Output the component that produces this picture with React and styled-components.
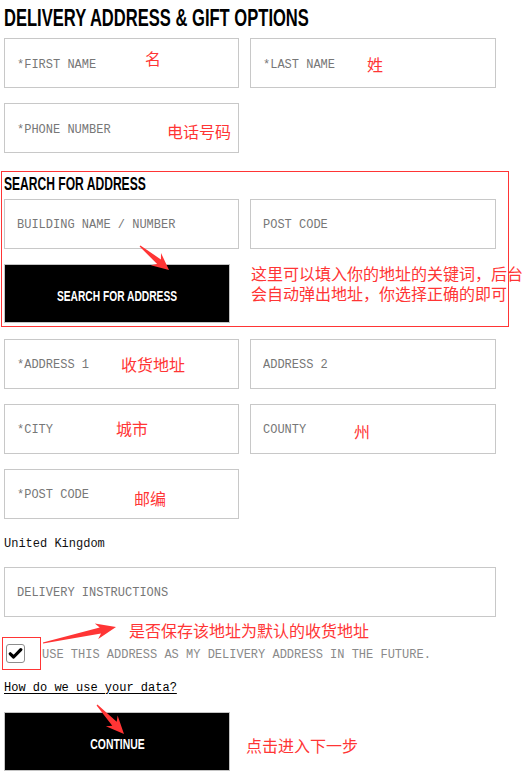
import React from "react";
import styled, { createGlobalStyle } from "styled-components";

const GlobalStyle = createGlobalStyle`
  html, body {
    margin: 0;
    padding: 0;
    background: #fff;
  }
  body {
    font-family: "Liberation Mono", "DejaVu Sans Mono", monospace;
  }
`;

const RED = "#ff3535";

const Page = styled.div`
  position: relative;
  width: 526px;
  min-height: 777px;
  box-sizing: border-box;
  padding: 7px 0 0 4px;
  overflow: hidden;
`;

const Form = styled.form`
  width: 492px;
  display: flex;
  flex-direction: column;
`;

const Condensed = styled.span`
  display: inline-block;
  white-space: nowrap;
  transform: scaleX(${({ $sx }) => $sx || 0.7});
  transform-origin: ${({ $origin }) => $origin || "left"} center;
`;

const Title = styled.h2`
  margin: 0 0 8px;
  height: 23px;
  font-family: "Liberation Sans", Arial, sans-serif;
  font-weight: 700;
  font-size: 23px;
  line-height: 23px;
  color: #000;
  white-space: nowrap;
`;

const SubTitle = styled.h3`
  margin: 0 0 6px;
  height: 18px;
  font-family: "Liberation Sans", Arial, sans-serif;
  font-weight: 700;
  font-size: 17.5px;
  line-height: 18px;
  color: #000;
  white-space: nowrap;
`;

const FieldGrid = styled.div`
  display: grid;
  grid-template-columns: 235px 246px;
  column-gap: 11px;
  row-gap: 15px;
  margin-top: ${({ $mt }) => $mt || 0}px;
`;

const Input = styled.input`
  box-sizing: border-box;
  width: 100%;
  height: 50px;
  margin: 0;
  padding: 3px 0 0 12px;
  border: 1px solid #c8c8c8;
  border-radius: 0;
  background: #fff;
  font-family: "Liberation Mono", "DejaVu Sans Mono", monospace;
  font-size: 12px;
  color: #333;
  outline: none;
  grid-column: ${({ $full }) => ($full ? "1 / -1" : "auto")};

  &::placeholder {
    color: #777;
    opacity: 1;
  }
`;

const SearchSection = styled.section`
  margin-top: 21.5px;
  display: flex;
  flex-direction: column;
`;

const BlackButton = styled.button`
  box-sizing: border-box;
  width: 226px;
  height: 59px;
  margin-top: ${({ $mt }) => $mt || 0}px;
  padding: 4px 0 0;
  border: 1px solid #c4c4c4;
  background: #000;
  color: #fff;
  font-family: "Liberation Sans", Arial, sans-serif;
  font-weight: 700;
  font-size: 15.5px;
  line-height: 15px;
  cursor: pointer;
  display: flex;
  align-items: center;
  justify-content: center;
`;

const CountryLine = styled.div`
  margin-top: 18px;
  height: 15px;
  font-size: 12px;
  line-height: 15px;
  color: #111;
`;

const CheckRow = styled.label`
  margin-top: 27px;
  display: flex;
  align-items: center;
  gap: 17px;
  padding-left: 2px;
  cursor: pointer;
`;

const CheckBox = styled.span`
  box-sizing: border-box;
  width: 19px;
  height: 19px;
  flex: none;
  border: 1px solid #8d8d8d;
  border-radius: 3px;
  background: #fff;
  display: flex;
  align-items: center;
  justify-content: center;
`;

const CheckText = styled.span`
  font-size: 12px;
  line-height: 15px;
  color: #8a8a8a;
  white-space: nowrap;
  margin-top: 4px;
`;

const DataLink = styled.a`
  margin-top: 18px;
  align-self: flex-start;
  font-size: 12px;
  line-height: 15px;
  color: #000;
  text-decoration: underline;
  text-underline-offset: 2px;
`;

/* annotation overlay: red marks laid over the screenshot */
const Overlay = styled.div`
  position: absolute;
  inset: 0;
  pointer-events: none;
`;

const Note = styled.span`
  position: absolute;
  left: ${({ $x }) => $x}px;
  top: ${({ $y }) => $y}px;
  font-family: "Noto Sans CJK SC", "Noto Sans", sans-serif;
  font-size: 16px;
  line-height: 16px;
  color: ${RED};
  white-space: nowrap;
`;

const Frame = styled.div`
  position: absolute;
  box-sizing: border-box;
  left: ${({ $x }) => $x}px;
  top: ${({ $y }) => $y}px;
  width: ${({ $w }) => $w}px;
  height: ${({ $h }) => $h}px;
  border: 1px solid ${RED};
`;

const ArrowLayer = styled.svg`
  position: absolute;
  left: 0;
  top: 0;
`;

function arrowPoints([x1, y1], [x2, y2], head = 16, half = 8, neck = 3) {
  const len = Math.hypot(x2 - x1, y2 - y1);
  const dx = (x2 - x1) / len;
  const dy = (y2 - y1) / len;
  const nx = -dy;
  const ny = dx;
  const bx = x2 - dx * head;
  const by = y2 - dy * head;
  const cx = x2 - dx * (head - 4);
  const cy = y2 - dy * (head - 4);
  const pts = [
    [x1 + nx * 0.6, y1 + ny * 0.6],
    [cx + nx * neck, cy + ny * neck],
    [bx + nx * half, by + ny * half],
    [x2, y2],
    [bx - nx * half, by - ny * half],
    [cx - nx * neck, cy - ny * neck],
    [x1 - nx * 0.6, y1 - ny * 0.6],
  ];
  return pts.map((p) => p.map((v) => v.toFixed(1)).join(",")).join(" ");
}

const arrows = [
  { from: [140, 246], to: [169, 270], head: 17, half: 8 },
  { from: [43, 643], to: [116, 627], head: 20, half: 8 },
  { from: [97, 705], to: [124, 734], head: 18, half: 8 },
];

const notes = [
  { x: 145, y: 50, text: "名" },
  { x: 367, y: 56, text: "姓" },
  { x: 167, y: 123, text: "电话号码" },
  { x: 251, y: 265, text: "这里可以填入你的地址的关键词，后台" },
  { x: 251, y: 285, text: "会自动弹出地址，你选择正确的即可" },
  { x: 121, y: 356, text: "收货地址" },
  { x: 116, y: 420, text: "城市" },
  { x: 354, y: 423, text: "州" },
  { x: 134, y: 490, text: "邮编" },
  { x: 129, y: 622, text: "是否保存该地址为默认的收货地址" },
  { x: 246, y: 737, text: "点击进入下一步" },
];

const Check = () => (
  <svg width="15" height="15" viewBox="0 0 15 15">
    <path
      d="M2.3 7.8 L5.6 11 L12.8 3.6"
      fill="none"
      stroke="#000"
      strokeWidth="3.2"
      strokeLinecap="round"
      strokeLinejoin="round"
    />
  </svg>
);

export default function App() {
  return (
    <>
      <GlobalStyle />
      <Page>
        <Form onSubmit={(e) => e.preventDefault()}>
          <Title>
            <Condensed $sx={0.72}>DELIVERY ADDRESS &amp; GIFT OPTIONS</Condensed>
          </Title>

          <FieldGrid>
            <Input placeholder="*FIRST NAME" />
            <Input placeholder="*LAST NAME" />
            <Input placeholder="*PHONE NUMBER" />
          </FieldGrid>

          <SearchSection>
            <SubTitle>
              <Condensed $sx={0.69}>SEARCH FOR ADDRESS</Condensed>
            </SubTitle>
            <FieldGrid>
              <Input placeholder="BUILDING NAME / NUMBER" />
              <Input placeholder="POST CODE" />
            </FieldGrid>
            <BlackButton type="button" $mt={15}>
              <Condensed $sx={0.66} $origin="center">
                SEARCH FOR ADDRESS
              </Condensed>
            </BlackButton>
          </SearchSection>

          <FieldGrid $mt={16}>
            <Input placeholder="*ADDRESS 1" />
            <Input placeholder="ADDRESS 2" />
            <Input placeholder="*CITY" />
            <Input placeholder="COUNTY" />
            <Input placeholder="*POST CODE" />
          </FieldGrid>

          <CountryLine>United Kingdom</CountryLine>

          <FieldGrid $mt={15}>
            <Input $full placeholder="DELIVERY INSTRUCTIONS" />
          </FieldGrid>

          <CheckRow>
            <CheckBox>
              <Check />
            </CheckBox>
            <CheckText>USE THIS ADDRESS AS MY DELIVERY ADDRESS IN THE FUTURE.</CheckText>
          </CheckRow>

          <DataLink href="#">How do we use your data?</DataLink>

          <BlackButton type="submit" $mt={16}>
            <Condensed $sx={0.67} $origin="center">
              CONTINUE
            </Condensed>
          </BlackButton>
        </Form>

        <Overlay>
          <Frame $x={1} $y={171} $w={508} $h={156} />
          <Frame $x={2} $y={637} $w={39} $h={33} />

          {notes.map((n, i) => (
            <Note key={i} $x={n.x} $y={n.y}>
              {n.text}
            </Note>
          ))}

          <ArrowLayer width="526" height="777" viewBox="0 0 526 777">
            {arrows.map((a, i) => (
              <polygon
                key={i}
                points={arrowPoints(a.from, a.to, a.head, a.half)}
                fill={RED}
              />
            ))}
          </ArrowLayer>
        </Overlay>
      </Page>
    </>
  );
}
